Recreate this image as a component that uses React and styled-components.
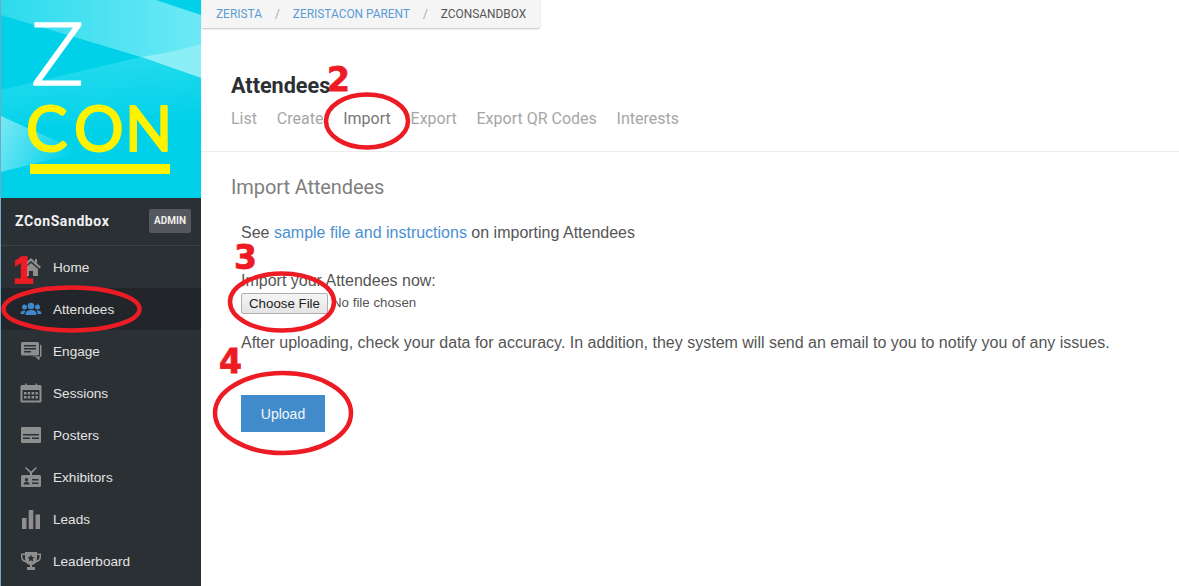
import React from "react";
import styled, { createGlobalStyle } from "styled-components";

const Global = createGlobalStyle`
  html, body { margin: 0; padding: 0; height: 586px; overflow: hidden; background: #fff; }
  * { box-sizing: border-box; }
`;
const Page = styled.div`
  position: relative; width: 1179px; height: 586px; display: flex; overflow: hidden;
  font-family: "Liberation Sans", Arial, sans-serif; color: #555;
`;
const Sidebar = styled.aside`
  width: 201px; flex: none; height: 586px; background: #2b3035; border-left: 1px solid #6fa9c4;
`;
const LogoBox = styled.div`height: 198px; background: #00d0e8; line-height: 0;`;
const Org = styled.div`
  height: 48px; display: flex; align-items: center; justify-content: space-between;
  padding: 0 10px 2px 14px; border-bottom: 1px solid #3a4046;
`;
const OrgName = styled.span`font: 700 14px Roboto, sans-serif; letter-spacing: .6px; color: #f1f1f1;`;
const RoleBadge = styled.span`
  width: 42px; height: 24px; border-radius: 2px; background: #54585c; color: #eee;
  font: 700 10px Roboto, sans-serif; display: flex; align-items: center; justify-content: center;
`;
const Nav = styled.nav`display: flex; flex-direction: column;`;
const NavItem = styled.a`
  height: 42px; display: flex; align-items: center; gap: 11px; padding-left: 19px;
  font-size: 13.6px; color: #e3e3e3; background: ${p => (p.$active ? "#22262a" : "transparent")};
  svg { width: 22px; height: 22px; flex: none; fill: ${p => (p.$active ? "#3f88c9" : "#8e8e8e")}; }
`;
const Main = styled.main`flex: 1; min-width: 0;`;
const Crumbs = styled.ol`
  margin: 0 0 0 1px; padding: 0 14px; list-style: none; display: inline-flex; align-items: center;
  height: 28px; background: #f5f5f5; border-radius: 0 0 3px 0; box-shadow: 0 1px 2px rgba(0,0,0,.25);
  font: 11.9px Roboto, sans-serif; text-transform: uppercase;
  li + li::before { content: "/"; color: #aaa; margin: 0 13px; }
`;
const Crumb = styled.li`color: ${p => (p.$current ? "#555" : "#5a9bd5")};`;
const Head = styled.header`
  height: 124px; padding: 46px 30px 0; border-bottom: 1px solid #ececec;
`;
const Title = styled.h1`margin: 0; font: 700 21.6px/24px Roboto, sans-serif; color: #2b2f33;`;
const Tabs = styled.div`display: flex; gap: 19.8px; margin-top: 11px;`;
const Tab = styled.a`font: 16px/20px Roboto, sans-serif; color: ${p => (p.$active ? "#777" : "#a6a6a6")};`;
const Content = styled.section`padding: 23px 40px 0 30px;`;
const SubTitle = styled.h2`margin: 0; font: 400 20px/24px Roboto, sans-serif; letter-spacing: -0.1px; color: #808080;`;
const Body = styled.div`padding: 24px 0 0 10px; font-size: 16px; line-height: 20px;`;
const Para = styled.p`margin: 0 0 ${p => p.$after || 0}px;`;
const Link = styled.a`color: #4a90d0;`;
const FileRow = styled.div`display: flex; align-items: center; height: 22px; font-size: 13.3px; margin-bottom: 19px;`;
const ChooseBtn = styled.button`
  width: 87px; height: 21px; padding: 0; margin-right: 4px; border: 1px solid #adadad; border-radius: 2px;
  background: linear-gradient(#f5f5f5, #e4e4e4); font: 13.3px "Liberation Sans", sans-serif; color: #222;
`;
const Upload = styled.button`
  display: block; margin-top: 42px; width: 84px; height: 37px; border: 0; background: #428bca;
  color: #f2f7fb; font: 14px "Liberation Sans", sans-serif; padding: 0;
`;
const Marks = styled.svg`position: absolute; inset: 0; width: 1179px; height: 586px; pointer-events: none;`;
const Num = styled.span`
  position: absolute; left: ${p => p.$x}px; top: ${p => p.$y}px; color: #ed1c24;
  font: 700 33px/1 "DejaVu Sans", sans-serif; -webkit-text-stroke: .8px #ed1c24;
`;
const NumOne = styled(Num)`
  font: 700 36px/1 "Liberation Sans", sans-serif; -webkit-text-stroke: 1.6px #ed1c24;
`;

const Logo = () => (
  <svg width="200" height="198" viewBox="0 0 200 198">
    <defs>
      <linearGradient id="top" x1="0" x2="1" y1="0" y2="0">
        <stop offset="0" stopColor="#2cdbed" />
        <stop offset="1" stopColor="#6de9f5" />
      </linearGradient>
      <linearGradient id="mid" x1="0" x2="0.25" y1="0" y2="1">
        <stop offset="0" stopColor="#2bdcee" />
        <stop offset="1" stopColor="#00d1e9" />
      </linearGradient>
      <linearGradient id="low" x1="0" x2="1" y1="0" y2="0.3">
        <stop offset="0" stopColor="#7ae9f5" />
        <stop offset="1" stopColor="#00d1e9" />
      </linearGradient>
    </defs>
    <rect width="200" height="198" fill="#00d1e9" />
    <path d="M0 0 H155 L200 15 V78 L140 57 L0 15 Z" fill="url(#top)" />
    <path d="M140 57 Q175 52 200 44 V78 Z" fill="#8ceef6" />
    <path d="M0 90 L140 57 L200 78 V135 L0 120 Z" fill="url(#mid)" />
    <path d="M0 116 L80 152 L0 172 Z" fill="url(#low)" />
    <text x="30" y="85" fontFamily="Lato, sans-serif" fontWeight="300" fontSize="87" fill="#fff" stroke="#fff" strokeWidth="1.6" strokeLinejoin="round" textLength="53" lengthAdjust="spacingAndGlyphs">Z</text>
    <text x="25 73 124" y="151" fontFamily="Lato, sans-serif" fontWeight="400" fontSize="62" fill="#fff200" stroke="#fff200" strokeWidth="2" strokeLinejoin="round">CON</text>
    <rect x="29" y="164" width="140" height="10" fill="#fff200" />
  </svg>
);

const icons = {
  home: <svg viewBox="0 0 22 22"><path d="M11 2 L1 11 L2.5 12.5 L11 5 L19.5 12.5 L21 11 L17 7.5 V3 H15 V5.7 Z" /><path d="M4 13 L11 7 L18 13 V20 H13 V15 H9 V20 H4 Z" /></svg>,
  users: <svg viewBox="0 0 22 22"><circle cx="11" cy="8" r="3.3" /><path d="M5.5 17 C5.5 13 8 12 11 12 C14 12 16.5 13 16.5 17 Z" /><circle cx="4.5" cy="9" r="2.5" /><circle cx="17.5" cy="9" r="2.5" /><path d="M0.5 16 C0.5 13.5 2 12.5 4.5 12.5 L5.5 13 C4.7 14 4.5 15 4.4 16 Z M21.5 16 C21.5 13.5 20 12.5 17.5 12.5 L16.5 13 C17.3 14 17.5 15 17.6 16 Z" /></svg>,
  engage: <svg viewBox="0 0 22 22"><path fillRule="evenodd" d="M2.5 2 H17.5 Q19 2 19 3.5 V14 Q19 15.5 17.5 15.5 H2.5 Q1 15.5 1 14 V3.5 Q1 2 2.5 2 Z M4 5 V6.5 H16 V5 Z M4 8 V9.5 H16 V8 Z M4 11 V12.5 H11 V11 Z" /><path d="M20 4.5 Q21.5 4.5 21.5 6 V16 Q21.5 17 20 17 H19.5 V20.5 L15.5 17 H13 V16.5 H19 Q20 16.5 20 15.5 Z" /></svg>,
  sessions: <svg viewBox="0 0 22 22"><path fillRule="evenodd" d="M2 3 H5 V1.5 H6.5 V3 H15.5 V1.5 H17 V3 H20 Q21.5 3 21.5 4.5 V19 Q21.5 20.5 20 20.5 H2 Q0.5 20.5 0.5 19 V4.5 Q0.5 3 2 3 Z M2.5 8 V18.5 H19.5 V8 Z" /><path d="M4 10 H6.5 V12.5 H4 Z M7.7 10 H10.2 V12.5 H7.7 Z M11.6 10 H14.1 V12.5 H11.6 Z M15.4 10 H17.9 V12.5 H15.4 Z M4 14 H6.5 V16.5 H4 Z M7.7 14 H10.2 V16.5 H7.7 Z M11.6 14 H14.1 V16.5 H11.6 Z M15.4 14 H17.9 V16.5 H15.4 Z" /></svg>,
  posters: <svg viewBox="0 0 22 22"><path fillRule="evenodd" d="M2 3 H20 Q21 3 21 4 V18 Q21 19 20 19 H2 Q1 19 1 18 V4 Q1 3 2 3 Z M3 10 V11.5 H19 V10 Z M3 13.5 V15 H10 V13.5 Z M12 13.5 V15 H19 V13.5 Z" /></svg>,
  exhibitors: <svg viewBox="0 0 22 22"><path d="M6 1 L11 5.5 L16 1 L17 2 L12 7 V9 H10 V7 L5 2 Z" /><path fillRule="evenodd" d="M2.5 9 H19.5 Q21 9 21 10.5 V20 Q21 21 19.5 21 H2.5 Q1 21 1 20 V10.5 Q1 9 2.5 9 Z M6.5 12 A1.7 1.7 0 1 0 6.5 15.4 A1.7 1.7 0 1 0 6.5 12 Z M3.5 18.5 H9.5 C9.5 16.5 8 16 6.5 16 C5 16 3.5 16.5 3.5 18.5 Z M12 13 V14.5 H18.5 V13 Z M12 16.5 V18 H18.5 V16.5 Z" /></svg>,
  leads: <svg viewBox="0 0 22 22"><path d="M2 10 H6.5 V21 H2 Z M8.7 2 H13.3 V21 H8.7 Z M15.5 6.5 H20 V21 H15.5 Z" /></svg>,
  trophy: <svg viewBox="0 0 22 22"><path fillRule="evenodd" d="M5 2 H17 V3.5 H21 V7 C21 10 19 12 16 12.5 C15 14 13.5 14.5 12 15 V17 H15 V20 H7 V17 H10 V15 C8.5 14.5 7 14 6 12.5 C3 12 1 10 1 7 V3.5 H5 Z M2.5 5 V7 C2.5 8.8 3.6 10 5.3 10.6 C5.1 9 5 7 5 5 Z M19.5 5 H17 C17 7 16.9 9 16.7 10.6 C18.4 10 19.5 8.8 19.5 7 Z M11 4.5 L9.9 7 L7.5 7.2 L9.3 9 L8.8 11.5 L11 10.2 L13.2 11.5 L12.7 9 L14.5 7.2 L12.1 7 Z" /></svg>,
};

const items = [
  ["home", "Home"], ["users", "Attendees", true], ["engage", "Engage"], ["sessions", "Sessions"],
  ["posters", "Posters"], ["exhibitors", "Exhibitors"], ["leads", "Leads"], ["trophy", "Leaderboard"],
];

export default function App() {
  return (
    <Page>
      <Global />
      <Sidebar>
        <LogoBox><Logo /></LogoBox>
        <Org><OrgName>ZConSandbox</OrgName><RoleBadge>ADMIN</RoleBadge></Org>
        <Nav>
          {items.map(([ic, label, active]) => (
            <NavItem key={label} $active={active}>{icons[ic]}{label}</NavItem>
          ))}
        </Nav>
      </Sidebar>
      <Main>
        <Crumbs>
          <Crumb>Zerista</Crumb><Crumb>ZeristaCon Parent</Crumb><Crumb $current>ZConSandbox</Crumb>
        </Crumbs>
        <Head>
          <Title>Attendees</Title>
          <Tabs>
            <Tab>List</Tab><Tab>Create</Tab><Tab $active>Import</Tab><Tab>Export</Tab>
            <Tab>Export QR Codes</Tab><Tab>Interests</Tab>
          </Tabs>
        </Head>
        <Content>
          <SubTitle>Import Attendees</SubTitle>
          <Body>
            <Para $after={28}>See <Link>sample file and instructions</Link> on importing Attendees</Para>
            <Para $after={1}>Import your Attendees now:</Para>
            <FileRow><ChooseBtn>Choose File</ChooseBtn>No file chosen</FileRow>
            <Para>After uploading, check your data for accuracy. In addition, they system will send an email to you to notify you of any issues.</Para>
            <Upload>Upload</Upload>
          </Body>
        </Content>
      </Main>
      <Marks viewBox="0 0 1179 586" fill="none" stroke="#ed1c24" strokeWidth="4.5">
        <ellipse cx="71.5" cy="309" rx="68" ry="21.5" />
        <ellipse cx="367" cy="121" rx="41" ry="26.5" />
        <ellipse cx="282" cy="302" rx="52" ry="28.5" />
        <ellipse cx="283" cy="413" rx="68" ry="40" />
      </Marks>
      <NumOne $x={13} $y={253}>1</NumOne>
      <Num $x={327} $y={63}>2</Num>
      <Num $x={234} $y={241}>3</Num>
      <Num $x={219} $y={345}>4</Num>
    </Page>
  );
}
